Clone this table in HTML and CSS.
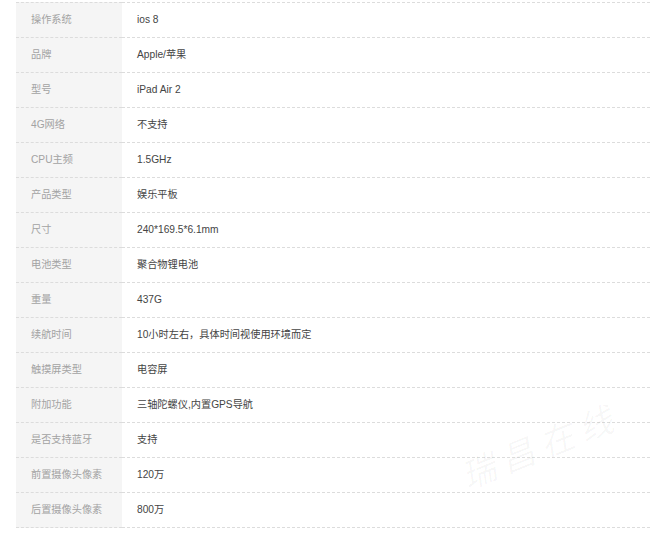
FILE: index.html
```html
<!DOCTYPE html>
<html lang="zh-CN">
<head>
    <meta charset="UTF-8">
    <title>规格参数</title>
    <link rel="stylesheet" href="styles.css">
</head>
<body>
    <div class="spec-wrap">
        <table class="spec-table">
            <tr><th>操作系统</th><td>ios 8</td></tr>
            <tr><th>品牌</th><td>Apple/苹果</td></tr>
            <tr><th>型号</th><td>iPad Air 2</td></tr>
            <tr><th>4G网络</th><td>不支持</td></tr>
            <tr><th>CPU主频</th><td>1.5GHz</td></tr>
            <tr><th>产品类型</th><td>娱乐平板</td></tr>
            <tr><th>尺寸</th><td>240*169.5*6.1mm</td></tr>
            <tr><th>电池类型</th><td>聚合物锂电池</td></tr>
            <tr><th>重量</th><td>437G</td></tr>
            <tr><th>续航时间</th><td>10小时左右，具体时间视使用环境而定</td></tr>
            <tr><th>触摸屏类型</th><td>电容屏</td></tr>
            <tr><th>附加功能</th><td>三轴陀螺仪,内置GPS导航</td></tr>
            <tr><th>是否支持蓝牙</th><td>支持</td></tr>
            <tr><th>前置摄像头像素</th><td>120万</td></tr>
            <tr><th>后置摄像头像素</th><td>800万</td></tr>
        </table>
        <!-- watermark -->
        <div class="watermark">瑞昌在线</div>
    </div>
</body>
</html>
```

FILE: styles.css
```css
body {
    margin: 0;
    padding: 2px 0 0 16px;
    background: #fff;
    font-family: 'Liberation Sans', 'Noto Sans CJK SC', sans-serif;
    font-size: 10.2px;
}
.spec-wrap {
    position: relative;
    overflow: hidden;
}
.spec-table {
    width: 100%;
    border-collapse: separate;
    border-spacing: 0;
}
.spec-table th,
.spec-table td {
    box-sizing: border-box;
    height: 35px;
    padding: 0 0 0 15px;
    line-height: 14px;
    text-align: left;
    font-weight: normal;
    vertical-align: middle;
    border-bottom: 1px dashed #dcdcdc;
}
.spec-table tr:first-child th,
.spec-table tr:first-child td {
    height: 36px;
    border-top: 1px dashed #dcdcdc;
}
.spec-table th {
    width: 106px;
    background: #f5f5f5;
    color: #a3a3a3;
}
.spec-table td {
    color: #444;
}
.watermark {
    position: absolute;
    left: 440px;
    top: 418px;
    font-size: 34px;
    font-style: italic;
    letter-spacing: 8px;
    color: rgba(0, 0, 0, 0.035);
    transform: rotate(-22deg);
    pointer-events: none;
}
```
